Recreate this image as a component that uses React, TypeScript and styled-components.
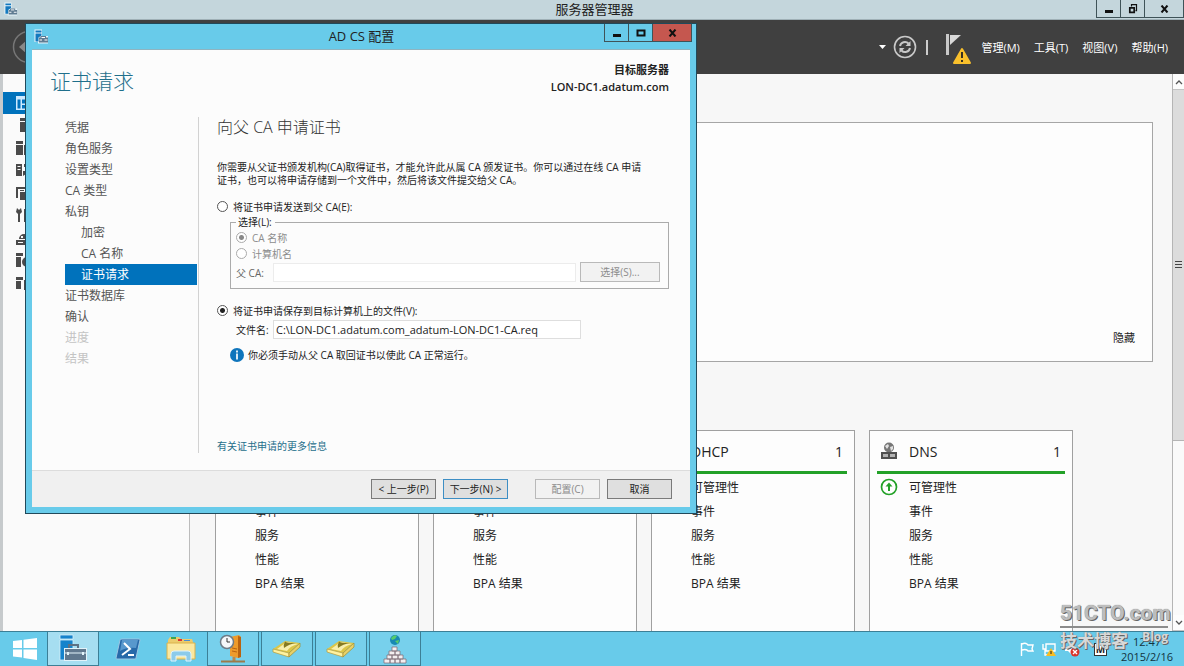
import React from 'react';
import styled, { createGlobalStyle, css } from 'styled-components';

const sky = '#68cbea';
const blue = '#0072bc';

const GlobalStyle = createGlobalStyle`
  *, *::before, *::after { box-sizing: border-box; }
  body {
    margin: 0;
    overflow: hidden;
    background: #f7f7f7;
    color: #222;
    font-family: "Open Sans", "Noto Sans CJK SC", sans-serif;
    font-size: 11px;
  }
  button, input { font: inherit; color: inherit; }
  h1, h2, h3, p, ul { margin: 0; padding: 0; font-weight: 400; }
  ul { list-style: none; }
`;

const Desktop = styled.div`
  position: relative;
  display: flex;
  flex-direction: column;
  height: 100vh;
`;

/* ---------- window chrome ---------- */

const TitleBar = styled.header`
  display: flex;
  justify-content: space-between;
  height: 20px;
  padding-left: 4px;
  background: #c4d6dc;
  border-bottom: 1px solid #9fb0b6;
`;

const TitleText = styled.h1`
  flex: 1;
  padding-left: 75px;
  font-size: 13px;
  line-height: 19px;
  text-align: center;
`;

const Controls = styled.div`
  display: flex;
  align-items: flex-start;
`;

const ControlButton = styled.button<{ $close?: boolean; $wide?: boolean }>`
  display: grid;
  place-items: center;
  width: ${(p) => (p.$wide ? 40 : 24)}px;
  height: 18px;
  padding: 0;
  border: 1px solid #3f5358;
  border-top: 0;
  border-right-width: ${(p) => (p.$wide ? 1 : 0)}px;
  background: ${(p) => (p.$close ? '#c5574f' : 'transparent')};
`;

const CommandBar = styled.nav`
  display: flex;
  align-items: center;
  height: 54px;
  flex: none;
  padding: 0 16px 0 12px;
  background: #404040;
  color: #fff;
`;

const CommandTools = styled.div`
  display: flex;
  align-items: center;
  margin-left: auto;
`;

const ToolButton = styled.button`
  display: grid;
  place-items: center;
  padding: 0;
  border: 0;
  background: none;
`;

const ToolDivider = styled.span`
  width: 2px;
  height: 15px;
  margin: 0 17px 0 9px;
  background: #ccc;
`;

const MenuList = styled.ul`
  display: flex;
  gap: 14px;
  margin-left: 9px;
`;

const MenuButton = styled.button`
  padding: 0;
  border: 0;
  background: none;
  white-space: nowrap;
`;

/* ---------- server manager body ---------- */

const Workspace = styled.div`
  display: flex;
  flex: 1;
  min-height: 0;
  border-left: 3px solid #c6cacc;
`;

const SideRail = styled.nav`
  width: 187px;
  flex: none;
  padding-top: 18px;
  background: #fafafa;
  border-right: 1px solid #bbb;
`;

const RailList = styled.ul`
  display: flex;
  flex-direction: column;
  justify-content: space-between;
  height: 202px;
`;

const RailItem = styled.a<{ $active?: boolean }>`
  display: flex;
  align-items: center;
  height: 22px;
  padding-left: 13px;
  color: ${(p) => (p.$active ? '#cdeaff' : '#4a4a4a')};
  background: ${(p) => (p.$active ? blue : 'none')};
`;

const Main = styled.main`
  display: flex;
  flex-direction: column;
  flex: 1;
  min-width: 0;
  padding: 48px 19px 0 25px;
  background: #f7f7f7;
`;

const Welcome = styled.section`
  display: flex;
  justify-content: flex-end;
  align-items: flex-end;
  height: 240px;
  flex: none;
  padding: 0 17px 15px;
  background: #fdfdfd;
  border: 1px solid #a6a6a6;
`;

const HideButton = styled.button`
  padding: 0;
  border: 0;
  background: none;
  line-height: 16px;
`;

const Tiles = styled.div`
  display: flex;
  gap: 14px;
  flex: 1;
  min-height: 0;
  margin-top: 68px;
`;

const TileCard = styled.section`
  width: 204px;
  padding: 0 7px;
  background: #fdfdfd;
  border: 1px solid #a0a0a0;
  border-bottom: 0;
`;

const TileHead = styled.div`
  display: grid;
  grid-template-columns: 32px 1fr auto;
  align-items: center;
  height: 43px;
  padding: 0 4px 0 0;
  border-bottom: 3px solid #23a128;
  font-size: 14px;
`;

const TileTitle = styled.h2`
  font-size: 14px;
`;

const TileRow = styled.li`
  display: grid;
  grid-template-columns: 32px 1fr;
  align-items: center;
  height: 24px;
  font-size: 12px;
`;

const TileList = styled.ul`
  padding-top: 1px;
`;

const IconCell = styled.span`
  display: grid;
  justify-content: start;
  padding-left: 3px;
`;

const ScrollTrack = styled.div`
  display: flex;
  flex-direction: column;
  width: 12px;
  flex: none;
  background: #fafafa;
  border-left: 1px solid #b5b5b5;
`;

const ScrollEnd = styled.button`
  display: grid;
  place-items: center;
  height: 16px;
  padding: 0;
  border: 0;
  border-bottom: 1px solid #c4c4c4;
  background: #fdfdfd;
`;

const ScrollThumb = styled.div`
  display: grid;
  place-items: center;
  flex: 0 0 63%;
  margin-bottom: auto;
  background: #dcdcdc;
  border-bottom: 1px solid #b5b5b5;
`;

/* ---------- taskbar ---------- */

const Taskbar = styled.footer`
  display: flex;
  height: 35px;
  flex: none;
  padding-left: 3px;
  background: ${sky};
  border-top: 1px solid #3c7f96;
`;

const TaskButton = styled.button<{ $state?: 'open' | 'active' }>`
  display: grid;
  place-items: center;
  width: ${(p) => (p.$state ? 52 : 53)}px;
  margin-right: ${(p) => (p.$state ? 2 : 0)}px;
  padding: 0;
  border: 0;
  background: none;
  ${(p) =>
    p.$state &&
    css`
      border: 1px solid #3c7f96;
      border-top: 0;
      background: ${p.$state === 'active' ? '#a6def1' : '#77d0ec'};
    `}
`;

const StartButton = styled(TaskButton)`
  width: 44px;
`;

const Tray = styled.div`
  display: flex;
  align-items: center;
  gap: 8px;
  margin-left: auto;
  padding-right: 11px;
`;

const Clock = styled.time`
  margin-left: 6px;
  line-height: 15px;
  text-align: center;
  color: #12333e;
`;

const Watermark = styled.div`
  position: absolute;
  right: 16px;
  bottom: 12px;
  width: 108px;
  color: #bdbdbd;
  font-weight: 700;
  text-shadow: 1px 1px 0 #666, 0 0 1px #777;
  pointer-events: none;
`;

const WatermarkName = styled.div`
  border-bottom: 2px solid #8c8c8c;
  font-family: Roboto, sans-serif;
  font-size: 21px;
  line-height: 25px;
  white-space: nowrap;
`;

const WatermarkSub = styled.div`
  display: flex;
  justify-content: space-between;
  font-size: 17px;
  line-height: 26px;
  color: #d8d8d8;
`;

const WatermarkBlog = styled.span`
  font-size: 12px;
  line-height: 18px;
`;

/* ---------- wizard dialog ---------- */

const Dialog = styled.section`
  position: absolute;
  left: 25px;
  top: 23px;
  width: 672px;
  border: 1px solid #21495a;
  background: ${sky};
  padding: 0 6px 6px;
`;

const DialogBar = styled.header`
  display: flex;
  justify-content: space-between;
  height: 25px;
  margin-right: -2px;
  padding-left: 2px;
`;

const DialogTitle = styled.h2`
  flex: 1;
  padding-left: 70px;
  font-size: 13px;
  line-height: 25px;
  text-align: center;
`;

const DialogIcon = styled.span`
  padding-top: 5px;
`;

const BarIcon = styled.span`
  padding-top: 2px;
`;

const DialogContent = styled.div`
  padding: 11px 21px 17px 18px;
  background: #fcfcfc;
  border-top: 1px solid #8fb4c0;
`;

const DialogHead = styled.div`
  display: flex;
  justify-content: space-between;
  height: 56px;
`;

const StepTitle = styled.h2`
  font-size: 21px;
  font-weight: 300;
  line-height: 41px;
  color: #1f6f8b;
`;

const Target = styled.p`
  font-weight: 600;
  line-height: 17px;
  text-align: right;
`;

const DialogColumns = styled.div`
  display: flex;
  min-height: 336px;
`;

const Steps = styled.ul`
  width: 149px;
  flex: none;
  padding: 0 1px 0 15px;
  border-right: 1px solid #d2d2d2;
`;

const Step = styled.li<{ $nested?: boolean; $current?: boolean; $off?: boolean }>`
  padding-left: ${(p) => (p.$nested ? 16 : 0)}px;
  font-size: 12px;
  line-height: 21px;
  color: ${(p) => (p.$current ? '#fff' : p.$off ? '#c4c4c4' : '#555')};
  background: ${(p) => (p.$current ? blue : 'none')};
`;

const Form = styled.form`
  display: flex;
  flex-direction: column;
  flex: 1;
  padding-left: 18px;
`;

const FormTitle = styled.h3`
  margin-bottom: 24px;
  font-size: 16px;
  font-weight: 300;
  line-height: 20px;
  color: #333;
`;

const Lead = styled.p`
  margin-bottom: 11px;
  line-height: 13px;
  white-space: nowrap;
  font-size: 10px;
`;

const RadioLabel = styled.label<{ $off?: boolean }>`
  display: flex;
  align-items: center;
  gap: 5px;
  height: 16px;
  font-size: 10px;
  color: ${(p) => (p.$off ? '#8c8c8c' : '#222')};
`;

const Radio = styled.input`
  appearance: none;
  width: 11px;
  height: 11px;
  margin: 0;
  border: 1px solid #555;
  border-radius: 50%;
  background: #fff;
  &:checked { background: radial-gradient(circle, #222 0 2px, #fff 3px); }
  &:disabled { border-color: #aaa; }
  &:checked:disabled { background: radial-gradient(circle, #888 0 2px, #fff 3px); }
`;

const Group = styled.fieldset`
  min-width: 0;
  margin: 2px 0 13px 13px;
  padding: 0 8px 6px 5px;
  border: 1px solid #ababab;
`;

const Legend = styled.legend`
  padding: 0 3px 0 2px;
  font-size: 10px;
  line-height: 13px;
`;

const FieldRow = styled.div<{ $inset?: boolean }>`
  display: flex;
  align-items: center;
  padding-left: ${(p) => (p.$inset ? 19 : 0)}px;
  margin-top: ${(p) => (p.$inset ? 2 : 1)}px;
`;

const FieldLabel = styled.label<{ $off?: boolean }>`
  width: 37px;
  font-size: 10px;
  white-space: nowrap;
  color: ${(p) => (p.$off ? '#666' : '#222')};
`;

const TextField = styled.input<{ $grow?: boolean }>`
  width: 308px;
  ${(p) => p.$grow && css`flex: 1; width: 0; margin-right: 4px;`}
  height: 19px;
  padding: 0 2px;
  border: 1px solid #dedede;
  background: #fff;
  &:disabled { border-color: #ececec; }
`;

const PushButton = styled.button<{ $primary?: boolean; $wide?: boolean }>`
  width: ${(p) => (p.$wide ? 80 : 65)}px;
  height: 20px;
  padding: 0;
  border: 1px solid ${(p) => (p.$primary ? '#3d8ec4' : '#7a7a7a')};
  background: #dfdfdf;
  font-size: 10px;
  line-height: 16px;
  white-space: nowrap;
  &:disabled { background: #f2f2f2; border-color: #b9b9b9; color: #8c8c8c; }
`;

const Note = styled.p`
  display: flex;
  align-items: center;
  gap: 4px;
  margin: 8px 0 0 13px;
  font-size: 10px;
  line-height: 16px;
`;

const MoreLink = styled.a`
  margin-top: auto;
  align-self: flex-start;
  font-size: 10px;
  line-height: 14px;
  color: #1f6f8b;
  text-decoration: none;
`;

const DialogFoot = styled.footer`
  display: flex;
  justify-content: flex-end;
  gap: 7px;
  height: 37px;
  padding: 8px 18px 0 0;
  background: #f0f0f0;
  border-top: 1px solid #dcdcdc;
`;

const FootGap = styled.span`
  width: 13px;
`;

/* ---------- drawings ---------- */

const ServerGlyph = ({ size = 15 }: { size?: number }) => (
  <svg width={size} height={size} viewBox="0 0 30 30" aria-hidden="true">
    <path d="M1 1h15v13h12v15H8v-3H1z" fill="#e8f6fb" />
    <path d="M3 3h12v4H3zM3 9h12v4l-6 4v8H3z" fill="#1479be" />
    <path d="M10 17h3v-3h11v3h4v10H10z" fill="#5f7c92" />
    <path d="M15 17h7M11 22h5m5 0h6" fill="none" stroke="#fff" strokeWidth="2" />
  </svg>
);

const ServerTaskIcon = () => (
  <svg width="29" height="29" viewBox="0 0 29 29" aria-hidden="true">
    <path d="M1 1h13v4H1zM1 6h13v9H6v11H1z" fill="#1583cc" stroke="#d6effa" strokeWidth=".8" />
    <path d="M10 14v-3h9v3" fill="none" stroke="#5d7184" strokeWidth="2" />
    <rect x="5.500" y="14.500" width="22" height="12" fill="#60788e" stroke="#e2f3fa" />
    <path d="M6 19h21" stroke="#e2f3fa" />
    <path d="M9 18v3m15-3v3" stroke="#e2f3fa" strokeWidth="2" />
  </svg>
);

const MinGlyph = () => (
  <svg width="10" height="8" viewBox="0 0 10 8"><path d="M1 5h8v3H1z" fill="#111" /></svg>
);
const MaxGlyph = () => (
  <svg width="10" height="8" viewBox="0 0 10 8"><path d="M1.500 1.500h7v5h-7z" fill="none" stroke="#111" strokeWidth="2" /></svg>
);
const RestoreGlyph = () => (
  <svg width="10" height="10" viewBox="0 0 10 10">
    <path d="M3.500 2.500V.7h5v6H7.500" fill="none" stroke="#111" strokeWidth="1.200" />
    <path d="M1.800 3.800h4.400v4.500H1.800z" fill="none" stroke="#111" strokeWidth="1.700" />
  </svg>
);
const CloseGlyph = () => (
  <svg width="9" height="8" viewBox="0 0 9 8"><path d="M1.500.5l6 7m0-7l-6 7" stroke="#111" strokeWidth="2" /></svg>
);

const BackIcon = () => (
  <svg width="34" height="34" viewBox="0 0 34 34" aria-hidden="true">
    <circle cx="17" cy="17" r="15.500" fill="none" stroke="#777" strokeWidth="1.500" />
    <path d="M7 17l8-7v14z" fill="#888" />
  </svg>
);

const RefreshIcon = () => (
  <svg width="24" height="24" viewBox="0 0 24 24" fill="none" stroke="#c9c9c9">
    <circle cx="12" cy="12" r="10.500" strokeWidth="1.600" />
    <path d="M7 11a5 5 0 0 1 8.500-2.500M17 13a5 5 0 0 1-8.500 2.500" strokeWidth="2" />
    <path d="M17.500 6v5h-5zM6.500 18v-5h5z" fill="#c9c9c9" stroke="none" />
  </svg>
);

const FlagAlertIcon = () => (
  <svg width="27" height="34" viewBox="0 0 27 34">
    <path d="M1 4h3v21H1z" fill="#c9c9c9" />
    <path d="M5 5h11L5 15z" fill="#d8d8d8" />
    <path d="M17 19l8 14H9z" fill="#f9c02c" stroke="#f9c02c" strokeWidth="2" strokeLinejoin="round" />
    <path d="M17 22v6m0 2v2" stroke="#222" strokeWidth="1.800" />
  </svg>
);

const Chevron = ({ down }: { down?: boolean }) => (
  <svg width="8" height="6" viewBox="0 0 8 6">
    <path d={down ? 'M1 1l3 3 3-3' : 'M1 5l3-3 3 3'} fill="none" stroke="#555" strokeWidth="1.300" />
  </svg>
);

const railShapes = [
  'M0 0h16v14H0zM1.500 3.500v9h3v-9zM6 3.500v4h8v-4zM6 9v3.500h8V9z',
  'M4 0h10v3H4zM4 4h10v10H4z',
  'M0 0h7v3H0zM0 4h7v10H0zM8 4h8v10H8z',
  'M0 1h6v12H0zM1.500 3v1h3V3zM1.500 6v1h3V6zM8 1h4v3H8zM12 5h4v9h-3l-3-3-3 2V8h3z',
  'M0 1h10v2H2v9H0zM4 4h4v1H4zM4 6h12v8H4z',
  'M1 0l2 2 2-2 1 4-2 2v8H2V6L0 4zM8 1h3v4h1v9H8z',
  'M3 8a5 5 0 0 1 10 0zM5 7h2V5H5zM0 9h16v5H0zM2 11v1h5v-1z',
  'M0 0h7v3H0zM0 4h5v10H0zM11 4a5 5 0 1 0 0 10A5 5 0 0 0 11 4zM9 7h3v4H9z',
  'M0 1h7v3H0zM0 5h5v8H0zM8 4h8v10H8z',
];

const RailIcon = ({ d }: { d: string }) => (
  <svg width="16" height="15" viewBox="0 0 16 15" aria-hidden="true">
    <path d={d} fill="currentColor" fillRule="evenodd" />
  </svg>
);

const DnsIcon = () => (
  <svg width="18" height="18" viewBox="0 0 18 18" aria-hidden="true">
    <circle cx="9" cy="5.500" r="5" fill="#777" />
    <path d="M5 4l3-2 1 2-2 3zM10 5l3-1v3l-2 2z" fill="#e2e2e2" />
    <path d="M1 10h16v7H1z" fill="#505050" />
    <path d="M3 12h5v3H3zM10 12h5v3h-5z" fill="#b3b3b3" />
  </svg>
);

const OkIcon = () => (
  <svg width="18" height="18" viewBox="0 0 18 18" aria-hidden="true">
    <circle cx="9" cy="9" r="7.500" fill="#fff" stroke="#23a128" strokeWidth="1.700" />
    <path d="M9 4.500l3.500 4H10V13H8V8.500H5.500z" fill="#23a128" />
  </svg>
);

const InfoIcon = () => (
  <svg width="14" height="14" viewBox="0 0 14 14" aria-hidden="true">
    <circle cx="7" cy="7" r="7" fill="#0f75bc" />
    <path d="M7 2.500v2M7 5.500v6" stroke="#fff" strokeWidth="1.700" />
  </svg>
);

const WindowsIcon = () => (
  <svg width="26" height="24" viewBox="0 0 26 24" aria-hidden="true">
    <path d="M1 4l9-1v8H1zM11.500 2.800L25 1v10H11.500zM1 12.500h9v8l-9-1zM11.500 12.500H25V23l-13.500-2z" fill="#fff" />
  </svg>
);

const PowerShellIcon = () => (
  <svg width="26" height="22" viewBox="0 0 26 22" aria-hidden="true">
    <path d="M7 1h17q1 0 1 1l-4 18q0 1-1 1H2q-1 0-1-1L5 2q0-1 2-1z" fill="#2769a9" stroke="#9cc6e4" />
    <path d="M7 2h16l-2 8Q12 9 5 13z" fill="#5898cd" />
    <path d="M9 5l6 6-8 6M13 17h6" fill="none" stroke="#fff" strokeWidth="2" />
  </svg>
);

const ExplorerIcon = () => (
  <svg width="30" height="26" viewBox="0 0 30 26" aria-hidden="true">
    <path d="M2 4l2-3h9l2 2h11l1 3v17H2z" fill="#eccb6c" />
    <path d="M5 1h5v2H5z" fill="#3ba551" /><path d="M12 3h4v2h-4z" fill="#d33" /><path d="M18 4h6v1h-6z" fill="#4a8ed2" />
    <path d="M1 7h28v16H1z" fill="#fbe89f" stroke="#d9b24c" />
    <path d="M5 25v-7q0-3 3-3h14q3 0 3 3v7h-5v-5H10v5z" fill="#8ccbea" stroke="#dff3fc" />
  </svg>
);

const ServerClockIcon = () => (
  <svg width="28" height="30" viewBox="0 0 28 30" aria-hidden="true">
    <path d="M11 3l9-2 2 2v20l-3 1-8-2z" fill="#ee9b2a" />
    <path d="M19 2l3 1v20l-3 1z" fill="#b9630f" />
    <path d="M13 14l5 1M13 17l5 1" stroke="#b9630f" />
    <path d="M15 23v4" stroke="#b98a4b" strokeWidth="3" />
    <path d="M2 27.500h24" stroke="#9a7a4b" strokeWidth="2" />
    <circle cx="8" cy="8" r="6.500" fill="#f4f7fa" stroke="#6d7b87" strokeWidth="1.500" />
    <path d="M8 4v4h3" fill="none" stroke="#333" />
  </svg>
);

const BookIcon = () => (
  <svg width="30" height="20" viewBox="0 0 30 20" aria-hidden="true">
    <path d="M1 10L13 2l15 2-11 10z" fill="#dcc648" />
    <path d="M1 10l16 4v4L1 13z" fill="#fff2a0" stroke="#b59a36" strokeWidth=".7" />
    <path d="M17 14L28 4v4L17 18z" fill="#e8d169" stroke="#a08e2e" strokeWidth=".7" />
    <path d="M5 10q6-4 9-7l12 2q-8 2-11 7z" fill="#f8efad" />
    <path d="M13 2.500q3 2 11 1.500-7 1-12 5-1-3 1-6.500z" fill="#857a22" />
  </svg>
);

const FirewallIcon = () => (
  <svg width="24" height="30" viewBox="0 0 24 30" aria-hidden="true">
    <circle cx="12" cy="6" r="5" fill="#1789b3" />
    <path d="M8 4q3-4 6-2l-2 3-3 1zM12 7l4-1-1 4z" fill="#57cb6b" />
    <g fill="#f3eef0" stroke="#84727b" strokeWidth=".8">
      <path d="M9 13h5v4H9zM6 17h6v4H6zM12 17h5v4h-5zM4 21h5v4H4zM9 21h6v4H9zM15 21h5v4h-5zM1 25h6v4H1zM7 25h5v4H7zM12 25h5v4h-5zM17 25h6v4h-6z" />
    </g>
  </svg>
);

const TrayFlag = () => (
  <svg width="14" height="15" viewBox="0 0 14 15"><path d="M1.500 1v13M2 2q3-1.500 5 0l1 1h5l-1 4 1 2H8L7 8Q5 7 2 8" fill="none" stroke="#fff" strokeWidth="1.400" /></svg>
);
const TrayNetwork = () => (
  <svg width="14" height="15" viewBox="0 0 14 15">
    <path d="M4 2h9v7H4zM1 2v5h2v6h4" fill="none" stroke="#fff" strokeWidth="1.400" />
    <path d="M9 6l5 8H4z" fill="#f9bd20" /><path d="M9 9v3" stroke="#222" />
  </svg>
);
const TraySound = () => (
  <svg width="16" height="15" viewBox="0 0 16 15">
    <path d="M1 5h3l4-4v12L4 9H1z" fill="#fff" />
    <circle cx="11" cy="10" r="4.500" fill="#d9342b" /><path d="M9 8l4 4m0-4l-4 4" stroke="#fff" strokeWidth="1.400" />
  </svg>
);

const InputMode = styled.span`
  display: grid;
  place-items: center;
  width: 13px;
  height: 13px;
  margin-left: 6px;
  border: 1px solid #333;
  background: #fff;
  font-size: 10px;
  font-weight: 700;
  line-height: 11px;
`;

/* ---------- content ---------- */

const menus = ['管理(M)', '工具(T)', '视图(V)', '帮助(H)'];
const tileNames = ['AD CS', 'AD DS', 'DHCP', 'DNS'];
const tileRows = ['可管理性', '事件', '服务', '性能', 'BPA 结果'];

const steps: { text: string; nested?: boolean; current?: boolean; off?: boolean }[] = [
  { text: '凭据' },
  { text: '角色服务' },
  { text: '设置类型' },
  { text: 'CA 类型' },
  { text: '私钥' },
  { text: '加密', nested: true },
  { text: 'CA 名称', nested: true },
  { text: '证书请求', nested: true, current: true },
  { text: '证书数据库' },
  { text: '确认' },
  { text: '进度', off: true },
  { text: '结果', off: true },
];

const Tile = ({ name }: { name: string }) => (
  <TileCard>
    <TileHead>
      <IconCell><DnsIcon /></IconCell>
      <TileTitle>{name}</TileTitle>
      <span>1</span>
    </TileHead>
    <TileList>
      {tileRows.map((row, i) => (
        <TileRow key={row}>
          <IconCell>{i === 0 && <OkIcon />}</IconCell>
          {row}
        </TileRow>
      ))}
    </TileList>
  </TileCard>
);

const Wizard = () => (
  <Dialog role="dialog" aria-labelledby="wizard-title">
    <DialogBar>
      <DialogIcon><ServerGlyph /></DialogIcon>
      <DialogTitle id="wizard-title">AD CS 配置</DialogTitle>
      <Controls>
        <ControlButton aria-label="最小化"><MinGlyph /></ControlButton>
        <ControlButton aria-label="最大化"><MaxGlyph /></ControlButton>
        <ControlButton $wide $close aria-label="关闭"><CloseGlyph /></ControlButton>
      </Controls>
    </DialogBar>
    <DialogContent>
      <DialogHead>
        <StepTitle>证书请求</StepTitle>
        <Target>目标服务器<br />LON-DC1.adatum.com</Target>
      </DialogHead>
      <DialogColumns>
        <Steps>
          {steps.map((s) => (
            <Step key={s.text + (s.nested ? '-sub' : '')} $nested={s.nested} $current={s.current} $off={s.off}>
              {s.text}
            </Step>
          ))}
        </Steps>
        <Form onSubmit={(e) => e.preventDefault()}>
          <FormTitle>向父 CA 申请证书</FormTitle>
          <Lead>
            你需要从父证书颁发机构(CA)取得证书，才能允许此从属 CA 颁发证书。你可以通过在线 CA 申请
            <br />
            证书，也可以将申请存储到一个文件中，然后将该文件提交给父 CA。
          </Lead>
          <RadioLabel>
            <Radio type="radio" name="delivery" />
            将证书申请发送到父 CA(E):
          </RadioLabel>
          <Group>
            <Legend>选择(L):</Legend>
            <RadioLabel $off>
              <Radio type="radio" name="lookup" defaultChecked disabled />
              CA 名称
            </RadioLabel>
            <RadioLabel $off>
              <Radio type="radio" name="lookup" disabled />
              计算机名
            </RadioLabel>
            <FieldRow>
              <FieldLabel $off htmlFor="parent-ca">父 CA:</FieldLabel>
              <TextField $grow id="parent-ca" disabled />
              <PushButton type="button" $wide disabled>选择(S)...</PushButton>
            </FieldRow>
          </Group>
          <RadioLabel>
            <Radio type="radio" name="delivery" defaultChecked />
            将证书申请保存到目标计算机上的文件(V):
          </RadioLabel>
          <FieldRow $inset>
            <FieldLabel htmlFor="file-name">文件名:</FieldLabel>
            <TextField id="file-name" defaultValue="C:\LON-DC1.adatum.com_adatum-LON-DC1-CA.req" />
          </FieldRow>
          <Note><InfoIcon />你必须手动从父 CA 取回证书以使此 CA 正常运行。</Note>
          <MoreLink href="#more">有关证书申请的更多信息</MoreLink>
        </Form>
      </DialogColumns>
    </DialogContent>
    <DialogFoot>
      <PushButton>&lt; 上一步(P)</PushButton>
      <PushButton $primary>下一步(N) &gt;</PushButton>
      <FootGap />
      <PushButton disabled>配置(C)</PushButton>
      <PushButton>取消</PushButton>
    </DialogFoot>
  </Dialog>
);

export default function App() {
  return (
    <Desktop lang="zh-CN">
      <GlobalStyle />
      <TitleBar>
        <BarIcon><ServerGlyph size={14} /></BarIcon>
        <TitleText>服务器管理器</TitleText>
        <Controls>
          <ControlButton aria-label="最小化"><MinGlyph /></ControlButton>
          <ControlButton aria-label="还原"><RestoreGlyph /></ControlButton>
          <ControlButton $wide aria-label="关闭"><CloseGlyph /></ControlButton>
        </Controls>
      </TitleBar>
      <CommandBar>
        <ToolButton aria-label="后退"><BackIcon /></ToolButton>
        <CommandTools>
          <ToolButton aria-label="更多">
            <svg width="16" height="6" viewBox="0 0 16 6"><path d="M2 1h7L5.500 5z" fill="#fff" /></svg>
          </ToolButton>
          <ToolButton aria-label="刷新"><RefreshIcon /></ToolButton>
          <ToolDivider />
          <ToolButton aria-label="通知"><FlagAlertIcon /></ToolButton>
          <MenuList>
            {menus.map((m) => (
              <li key={m}><MenuButton>{m}</MenuButton></li>
            ))}
          </MenuList>
        </CommandTools>
      </CommandBar>
      <Workspace>
        <SideRail>
          <RailList>
            {railShapes.map((d, i) => (
              <li key={d}><RailItem href="#view" $active={i === 0}><RailIcon d={d} /></RailItem></li>
            ))}
          </RailList>
        </SideRail>
        <Main>
          <Welcome><HideButton>隐藏</HideButton></Welcome>
          <Tiles>
            {tileNames.map((n) => <Tile key={n} name={n} />)}
          </Tiles>
        </Main>
        <ScrollTrack>
          <ScrollEnd aria-label="向上滚动"><Chevron /></ScrollEnd>
          <ScrollThumb>
            <svg width="7" height="7" viewBox="0 0 7 7"><path d="M0 .5h7M0 3.500h7M0 6.500h7" stroke="#444" /></svg>
          </ScrollThumb>
          <ScrollEnd aria-label="向下滚动"><Chevron down /></ScrollEnd>
        </ScrollTrack>
      </Workspace>
      <Taskbar>
        <StartButton aria-label="开始"><WindowsIcon /></StartButton>
        <TaskButton $state="active" aria-label="服务器管理器"><ServerTaskIcon /></TaskButton>
        <TaskButton aria-label="PowerShell"><PowerShellIcon /></TaskButton>
        <TaskButton aria-label="文件资源管理器"><ExplorerIcon /></TaskButton>
        <TaskButton $state="open" aria-label="DHCP"><ServerClockIcon /></TaskButton>
        <TaskButton $state="open" aria-label="目录一"><BookIcon /></TaskButton>
        <TaskButton $state="open" aria-label="目录二"><BookIcon /></TaskButton>
        <TaskButton $state="open" aria-label="DNS"><FirewallIcon /></TaskButton>
        <Tray>
          <TrayFlag />
          <TrayNetwork />
          <TraySound />
          <InputMode>M</InputMode>
          <Clock>12:47<br />2015/2/16</Clock>
        </Tray>
      </Taskbar>
      <Watermark>
        <WatermarkName>51CTO.com</WatermarkName>
        <WatermarkSub>技术博客<WatermarkBlog>Blog</WatermarkBlog></WatermarkSub>
      </Watermark>
      <Wizard />
    </Desktop>
  );
}
